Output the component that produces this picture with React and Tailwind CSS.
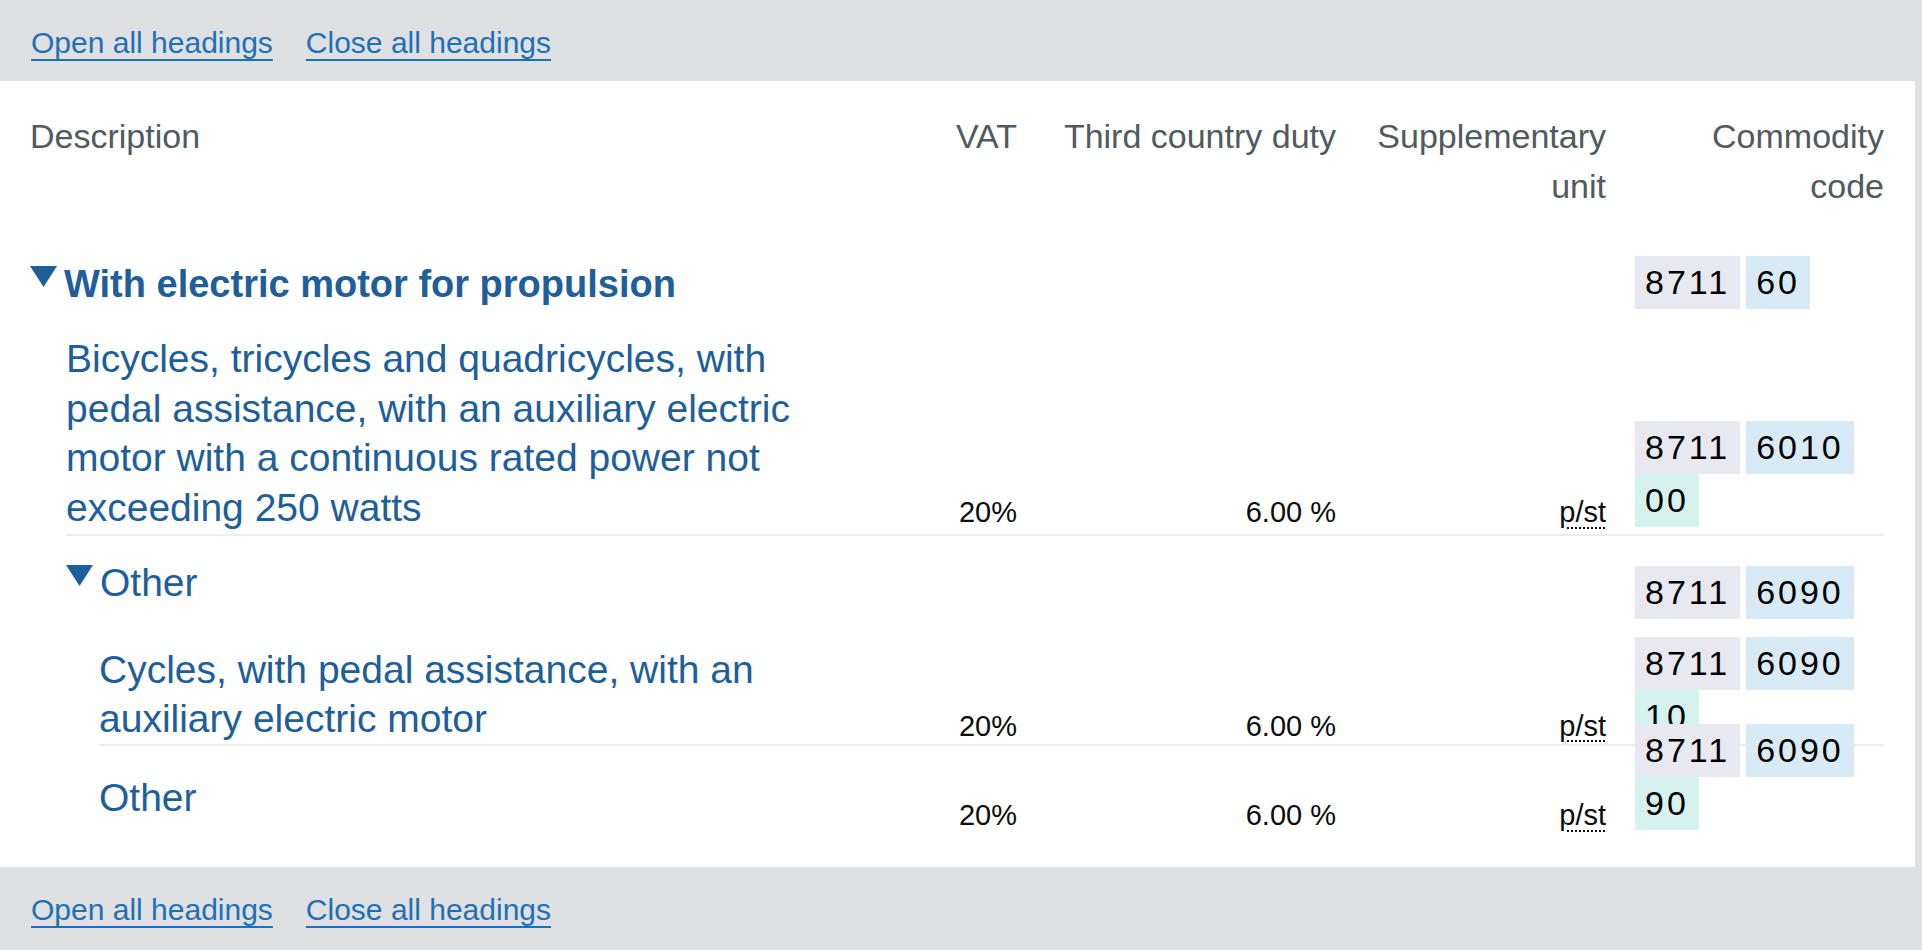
import React from 'react';

const rows = [
    {
        id: 'r1',
        text: 'With electric motor for propulsion',
        toggle: true,
        bold: true,
        indent: 'ml-0',
        pad: 'pt-[45px]',
        descMb: 'mb-0',
        valMb: 'mb-0',
        codeMb: 'mb-0',
        border: false,
        code: ['8711', '60'],
    },
    {
        id: 'r2',
        text: 'Bicycles, tricycles and quadricycles, with pedal assistance, with an auxiliary electric motor with a continuous rated power not exceeding 250 watts',
        indent: 'ml-[36px]',
        pad: 'pt-[25px] pb-[2px]',
        descMb: 'mb-0',
        valMb: 'mb-[5px]',
        codeMb: 'mb-[5px]',
        border: true,
        vat: '20%',
        duty: '6.00 %',
        unit: 'p/st',
        code: ['8711', '6010', '00'],
    },
    {
        id: 'r3',
        text: 'Other',
        toggle: true,
        indent: 'ml-[36px]',
        pad: 'pt-[22px]',
        descMb: 'mb-[11px]',
        valMb: 'mb-0',
        codeMb: 'mb-0',
        border: false,
        code: ['8711', '6090'],
    },
    {
        id: 'r4',
        text: 'Cycles, with pedal assistance, with an auxiliary electric motor',
        indent: 'ml-[69px]',
        pad: 'pt-[26px]',
        descMb: 'mb-0',
        valMb: 'mb-[3px]',
        codeMb: 'mb-[1px]',
        border: true,
        vat: '20%',
        duty: '6.00 %',
        unit: 'p/st',
        code: ['8711', '6090', '10'],
    },
    {
        id: 'r5',
        text: 'Other',
        indent: 'ml-[69px]',
        pad: 'pt-[27px] pb-[37px]',
        descMb: 'mb-[8px]',
        valMb: 'mb-0',
        codeMb: 'mb-0',
        border: false,
        vat: '20%',
        duty: '6.00 %',
        unit: 'p/st',
        code: ['8711', '6090', '90'],
    },
];

const boxColours = ['bg-[#e8e8f1]', 'bg-[#d9eaf7]', 'bg-[#d5f2ef]'];

function Links() {
    return (
        <div className="flex gap-[33px] pl-[31px] pt-[24px] text-[30px] leading-[38px] text-[#1d70b8]">
            <a href="#" className="underline decoration-[2px] underline-offset-[6px]">Open all headings</a>
            <a href="#" className="underline decoration-[2px] underline-offset-[6px]">Close all headings</a>
        </div>
    );
}

function Triangle() {
    return (
        <svg width="27" height="21" viewBox="0 0 27 21" className="mt-[7px] mr-[7px] shrink-0">
            <polygon points="0,0 27,0 13.5,21" fill="#1d5e9b" />
        </svg>
    );
}

function CodeBoxes({ parts }) {
    return (
        <div className="flex flex-wrap gap-x-[6px]">
            {parts.map((p, i) => (
                <span
                    key={i}
                    className={`${boxColours[i]} h-[53px] px-[10px] text-[34px] leading-[53px] tracking-[3px] text-black`}
                >
                    {p}
                </span>
            ))}
        </div>
    );
}

function Row({ row }) {
    return (
        <div className={`${row.indent} ${row.pad} flex items-end gap-[29px] ${row.border ? 'border-b-2 border-[#ebecec]' : ''}`}>
            <div className={`flex min-w-0 flex-1 items-start ${row.descMb}`}>
                {row.toggle && <Triangle />}
                <a
                    href="#"
                    className={`text-[#1d5e9b] ${row.bold ? 'text-[38px] font-bold leading-[50px]' : 'text-[39px] leading-[49.5px]'}`}
                >
                    {row.text}
                </a>
            </div>
            <div className={`w-[147px] text-right text-[29px] leading-[30px] text-[#0b0c0c] ${row.valMb}`}>{row.vat}</div>
            <div className={`w-[290px] text-right text-[29px] leading-[30px] text-[#0b0c0c] ${row.valMb}`}>{row.duty}</div>
            <div className={`w-[241px] text-right text-[29px] leading-[30px] text-[#0b0c0c] ${row.valMb}`}>
                {row.unit && (
                    <abbr title="Number of items" className="underline decoration-dotted decoration-[2px] underline-offset-[5px]">
                        {row.unit}
                    </abbr>
                )}
            </div>
            <div className={`flex h-[53px] w-[249px] flex-col justify-end ${row.codeMb}`}>
                <CodeBoxes parts={row.code} />
            </div>
        </div>
    );
}

export default function App() {
    return (
        <div className="min-h-[950px] bg-[#dee0e2] font-['Liberation_Sans',Arial,sans-serif]">
            <div className="h-[81px]">
                <Links />
            </div>

            <div className="w-[1915px] bg-white pl-[30px] pr-[31px] pt-[30px]">
                {/* Column headings */}
                <div className="flex items-start gap-[29px] text-[34px] leading-[50px] text-[#505a5f]">
                    <div className="flex-1">Description</div>
                    <div className="w-[147px] text-right">VAT</div>
                    <div className="w-[290px] text-right">Third country duty</div>
                    <div className="w-[241px] text-right">Supplementary<br />unit</div>
                    <div className="w-[249px] text-right">Commodity<br />code</div>
                </div>

                {rows.map((row) => (
                    <Row key={row.id} row={row} />
                ))}
            </div>

            <Links />
        </div>
    );
}
